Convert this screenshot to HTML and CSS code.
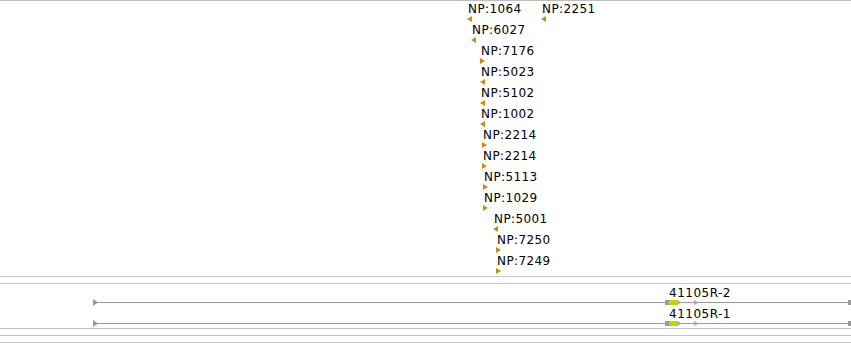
FILE: index.html
```html
<!DOCTYPE html>
<html>
<head>
<meta charset="utf-8">
<link rel="stylesheet" href="styles.css">
</head>
<body>
<div class="browser">
  <div class="track track-np">
    <div class="row">
      <div class="feat" style="left:467px"><span class="lbl">NP:1064</span><i class="arr arr-l"></i></div>
      <div class="feat" style="left:541px"><span class="lbl">NP:2251</span><i class="arr arr-l"></i></div>
    </div>
    <div class="row"><div class="feat" style="left:471px"><span class="lbl">NP:6027</span><i class="arr arr-l"></i></div></div>
    <div class="row"><div class="feat" style="left:480px"><span class="lbl">NP:7176</span><i class="arr arr-r"></i></div></div>
    <div class="row"><div class="feat" style="left:480px"><span class="lbl">NP:5023</span><i class="arr arr-l"></i></div></div>
    <div class="row"><div class="feat" style="left:480px"><span class="lbl">NP:5102</span><i class="arr arr-l"></i></div></div>
    <div class="row"><div class="feat" style="left:480px"><span class="lbl">NP:1002</span><i class="arr arr-l"></i></div></div>
    <div class="row"><div class="feat" style="left:482px"><span class="lbl">NP:2214</span><i class="arr arr-r"></i></div></div>
    <div class="row"><div class="feat" style="left:482px"><span class="lbl">NP:2214</span><i class="arr arr-r"></i></div></div>
    <div class="row"><div class="feat" style="left:483px"><span class="lbl">NP:5113</span><i class="arr arr-r"></i></div></div>
    <div class="row"><div class="feat" style="left:483px"><span class="lbl">NP:1029</span><i class="arr arr-r"></i></div></div>
    <div class="row"><div class="feat" style="left:493px"><span class="lbl">NP:5001</span><i class="arr arr-l"></i></div></div>
    <div class="row"><div class="feat" style="left:496px"><span class="lbl">NP:7250</span><i class="arr arr-r"></i></div></div>
    <div class="row"><div class="feat" style="left:496px"><span class="lbl">NP:7249</span><i class="arr arr-r"></i></div></div>
  </div>
  <div class="sep"></div>
  <div class="gap"></div>
  <div class="sep"></div>
  <div class="track track-tx">
    <div class="row">
      <div class="tx" style="left:93px">
        <span class="tx-lbl" style="left:576px">41105R-2</span>
        <svg class="tx-glyph" width="758" height="7" viewBox="0 0 758 7">
          <rect x="0" y="3" width="758" height="1" fill="#9a9a9a"/>
          <polygon points="0,0 5,3.5 0,7" fill="#9a9a9a"/>
          <rect x="572" y="1" width="5" height="5" fill="#9a9a9a"/>
          <rect x="576" y="1" width="9" height="5" fill="#c5d400"/>
          <polygon points="585,1.5 589,3.5 585,5.5" fill="#aaaaaa"/>
          <polygon points="601,1 606,3.5 601,6" fill="#aaaaaa"/>
          <rect x="755" y="1" width="3" height="5" fill="#9a9a9a"/>
        </svg>
      </div>
    </div>
    <div class="row">
      <div class="tx" style="left:93px">
        <span class="tx-lbl" style="left:576px">41105R-1</span>
        <svg class="tx-glyph" width="758" height="7" viewBox="0 0 758 7">
          <rect x="0" y="3" width="758" height="1" fill="#9a9a9a"/>
          <polygon points="0,0 5,3.5 0,7" fill="#9a9a9a"/>
          <rect x="572" y="1" width="5" height="5" fill="#9a9a9a"/>
          <rect x="576" y="1" width="9" height="5" fill="#c5d400"/>
          <polygon points="585,1.5 589,3.5 585,5.5" fill="#aaaaaa"/>
          <polygon points="601,1 606,3.5 601,6" fill="#aaaaaa"/>
          <rect x="755" y="1" width="3" height="5" fill="#9a9a9a"/>
        </svg>
      </div>
    </div>
  </div>
  <div class="gap-sm"></div>
  <div class="sep"></div>
  <div class="gap"></div>
  <div class="sep"></div>
  <div class="gap"></div>
  <div class="sep"></div>
</div>
</body>
</html>
```

FILE: styles.css
```css
html, body {
  margin: 0;
  padding: 0;
  background: #ffffff;
}

body {
  width: 851px;
  height: 343px;
  overflow: hidden;
  font-family: "DejaVu Sans", "Liberation Sans", sans-serif;
  font-size: 12px;
  color: #000000;
}

.browser {
  display: flex;
  flex-direction: column;
  width: 851px;
}

.track-np {
  border-top: 1px solid #bdbdbd;
  height: 275px;
}

.row {
  position: relative;
  height: 21px;
}

.feat {
  position: absolute;
  top: 0;
  display: flex;
  flex-direction: column;
  align-items: flex-start;
}

.lbl {
  display: block;
  line-height: 14px;
  height: 14px;
  padding-top: 1px;
  padding-left: 1px;
  letter-spacing: 0.4px;
  white-space: nowrap;
}

.arr {
  display: block;
  width: 0;
  height: 0;
  border-top: 3px solid transparent;
  border-bottom: 3px solid transparent;
}

.arr-l {
  border-right: 5px solid #cd8c0c;
}

.arr-r {
  border-left: 5px solid #cd8c0c;
}

.sep {
  height: 1px;
  background: #c4c4c4;
}

.gap {
  height: 6px;
}

.gap-sm {
  height: 2px;
}

.tx {
  position: absolute;
  top: 0;
  right: 0;
  height: 21px;
}

.tx-lbl {
  position: absolute;
  top: 2px;
  line-height: 14px;
  letter-spacing: 0.5px;
  white-space: nowrap;
}

.tx-glyph {
  position: absolute;
  left: 0;
  top: 15px;
  display: block;
}
```
